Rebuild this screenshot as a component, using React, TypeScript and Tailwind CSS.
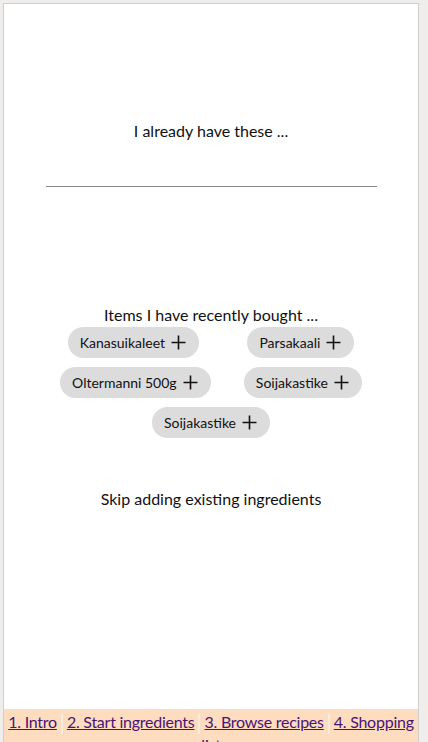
import React from "react";

const Plus = () => (
  <svg width="17" height="17" viewBox="0 0 17 17" className="ml-[5px]" aria-hidden>
    <path d="M8.5 1.5v14M1.5 8.5h14" stroke="#111" strokeWidth="1.6" fill="none" />
  </svg>
);

const Chip = ({ label }: { label: string }) => (
  <button className="flex h-[31px] items-center rounded-full bg-[#dcdcdc] px-[12px] text-[14px] text-[#111]">
    <span>{label}</span>
    <Plus />
  </button>
);

const Sep = () => <span className="mx-[4px] inline-block h-[20px] w-[2px] bg-[#f8ece0] align-middle" />;

export default function App() {
  const font = { fontFamily: "Lato, 'Noto Sans', sans-serif" };
  return (
    <div className="min-h-screen bg-[#efeeed] pl-[3px] pt-[3px] pr-[9px]" style={font}>
      <div className="flex h-[780px] flex-col border border-[#cfcfcf] bg-white">
        <main className="flex h-[705px] flex-col items-center">
          <p className="mt-[115px] text-[16px] leading-[24px] text-[#111]">I already have these ...</p>
          <input
            className="mt-[7px] h-[37px] w-[331px] border-b border-[#888] outline-none"
            aria-label="existing ingredients"
          />
          <p className="mt-[116px] text-[16px] leading-[24px] text-[#111]">Items I have recently bought ...</p>
          <div className="flex w-[335px] flex-wrap justify-around gap-y-[9px]">
            <Chip label="Kanasuikaleet" />
            <Chip label="Parsakaali" />
            <Chip label="Oltermanni 500g" />
            <Chip label="Soijakastike" />
            <Chip label="Soijakastike" />
          </div>
          <button className="mt-[49px] text-[16px] leading-[24px] text-[#111]">Skip adding existing ingredients</button>
        </main>
        <footer className="bg-[#fddcc0] pt-[2px] text-center text-[16px] leading-[22px] tracking-[-0.25px]">
          <a href="#" className="whitespace-nowrap text-[#4a1570] underline">1. Intro</a>
          <Sep />
          <a href="#" className="whitespace-nowrap text-[#4a1570] underline">2. Start ingredients</a>
          <Sep />
          <a href="#" className="whitespace-nowrap text-[#4a1570] underline">3. Browse recipes</a>
          <Sep />
          <a href="#" className="text-[#4a1570] underline"><span className="whitespace-nowrap">4. Shopping</span> list</a>
        </footer>
      </div>
    </div>
  );
}
